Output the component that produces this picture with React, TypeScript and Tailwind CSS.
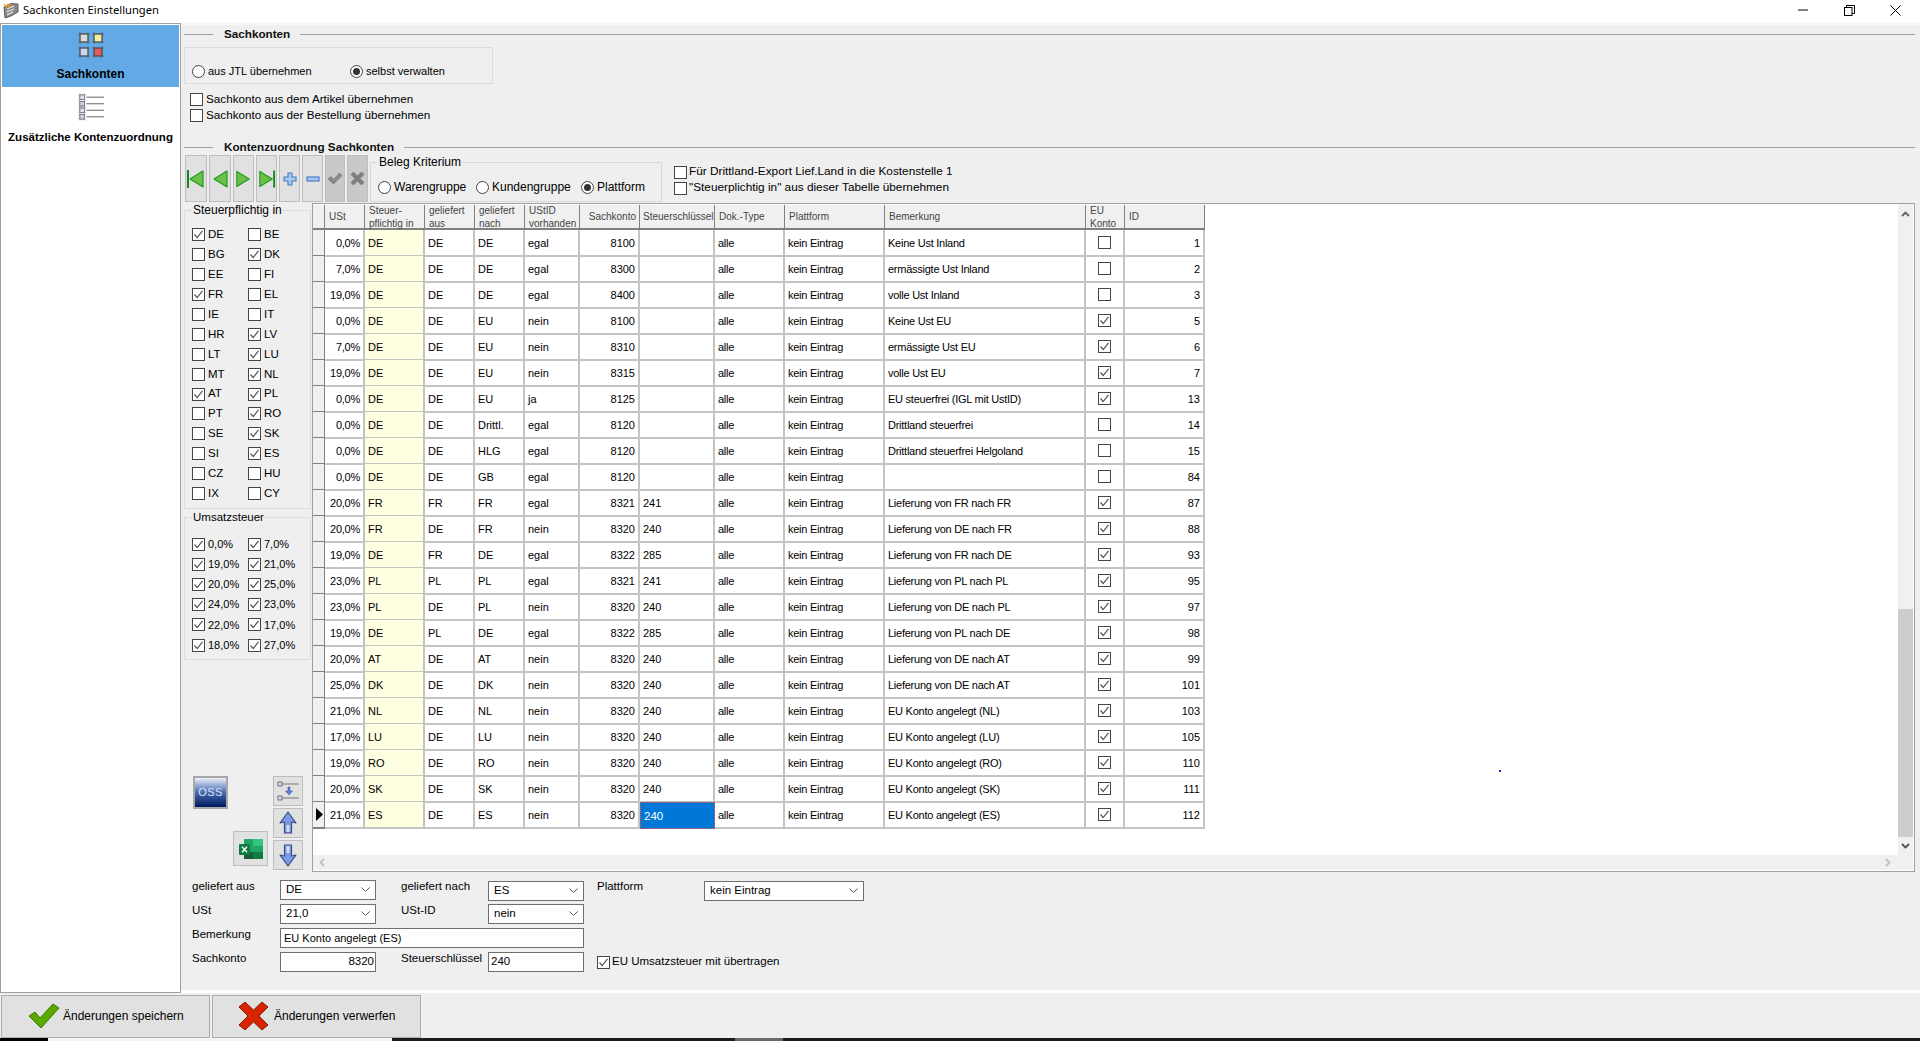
import type { ReactNode } from "react";

const rows: [string, string, string, string, string, string, string, string, boolean, string][] = [
  ["0,0%", "DE", "DE", "DE", "egal", "8100", "", "Keine Ust Inland", false, "1"],
  ["7,0%", "DE", "DE", "DE", "egal", "8300", "", "ermässigte Ust Inland", false, "2"],
  ["19,0%", "DE", "DE", "DE", "egal", "8400", "", "volle Ust Inland", false, "3"],
  ["0,0%", "DE", "DE", "EU", "nein", "8100", "", "Keine Ust EU", true, "5"],
  ["7,0%", "DE", "DE", "EU", "nein", "8310", "", "ermässigte Ust EU", true, "6"],
  ["19,0%", "DE", "DE", "EU", "nein", "8315", "", "volle Ust EU", true, "7"],
  ["0,0%", "DE", "DE", "EU", "ja", "8125", "", "EU steuerfrei (IGL mit UstID)", true, "13"],
  ["0,0%", "DE", "DE", "Drittl.", "egal", "8120", "", "Drittland steuerfrei", false, "14"],
  ["0,0%", "DE", "DE", "HLG", "egal", "8120", "", "Drittland steuerfrei Helgoland", false, "15"],
  ["0,0%", "DE", "DE", "GB", "egal", "8120", "", "", false, "84"],
  ["20,0%", "FR", "FR", "FR", "egal", "8321", "241", "Lieferung von FR nach FR", true, "87"],
  ["20,0%", "FR", "DE", "FR", "nein", "8320", "240", "Lieferung von DE nach FR", true, "88"],
  ["19,0%", "DE", "FR", "DE", "egal", "8322", "285", "Lieferung von FR nach DE", true, "93"],
  ["23,0%", "PL", "PL", "PL", "egal", "8321", "241", "Lieferung von PL nach PL", true, "95"],
  ["23,0%", "PL", "DE", "PL", "nein", "8320", "240", "Lieferung von DE nach PL", true, "97"],
  ["19,0%", "DE", "PL", "DE", "egal", "8322", "285", "Lieferung von PL nach DE", true, "98"],
  ["20,0%", "AT", "DE", "AT", "nein", "8320", "240", "Lieferung von DE nach AT", true, "99"],
  ["25,0%", "DK", "DE", "DK", "nein", "8320", "240", "Lieferung von DE nach AT", true, "101"],
  ["21,0%", "NL", "DE", "NL", "nein", "8320", "240", "EU Konto angelegt (NL)", true, "103"],
  ["17,0%", "LU", "DE", "LU", "nein", "8320", "240", "EU Konto angelegt (LU)", true, "105"],
  ["19,0%", "RO", "DE", "RO", "nein", "8320", "240", "EU Konto angelegt (RO)", true, "110"],
  ["20,0%", "SK", "DE", "SK", "nein", "8320", "240", "EU Konto angelegt (SK)", true, "111"],
  ["21,0%", "ES", "DE", "ES", "nein", "8320", "240", "EU Konto angelegt (ES)", true, "112"],
];

const countries: [string, boolean, string, boolean][] = [
  ["DE", true, "BE", false],
  ["BG", false, "DK", true],
  ["EE", false, "FI", false],
  ["FR", true, "EL", false],
  ["IE", false, "IT", false],
  ["HR", false, "LV", true],
  ["LT", false, "LU", true],
  ["MT", false, "NL", true],
  ["AT", true, "PL", true],
  ["PT", false, "RO", true],
  ["SE", false, "SK", true],
  ["SI", false, "ES", true],
  ["CZ", false, "HU", false],
  ["IX", false, "CY", false],
];

const rates = ["0,0%", "7,0%", "19,0%", "21,0%", "20,0%", "25,0%", "24,0%", "23,0%", "22,0%", "17,0%", "18,0%", "27,0%"];

function Check({ on }: { on?: boolean }) {
  return (
    <span className="flex h-[13px] w-[13px] shrink-0 items-center justify-center border border-[#444] bg-white">
      {on && (
        <svg width="11" height="11" viewBox="0 0 11 11" fill="none" stroke="#555" strokeWidth="1.2">
          <path d="M1.5 5.5 L4.2 8.5 L9.5 1.8" />
        </svg>
      )}
    </span>
  );
}

function Radio({ on }: { on?: boolean }) {
  return (
    <span className="flex h-[13px] w-[13px] shrink-0 items-center justify-center rounded-full border border-[#444] bg-white">
      {on && <span className="h-[7px] w-[7px] rounded-full bg-[#333]" />}
    </span>
  );
}

function SectionHead({ title, className }: { title: string; className: string }) {
  return (
    <div className={`flex items-center ${className}`}>
      <div className="h-[1px] w-[29px] bg-[#a0a0a0]" />
      <span className="ml-[11px] mr-[10px] text-[11.7px] font-bold leading-[14px] text-[#111]">{title}</span>
      <div className="h-[1px] flex-1 bg-[#a0a0a0]" />
    </div>
  );
}

function ToolBtn({ w, dim, children }: { w: string; dim?: boolean; children: ReactNode }) {
  return (
    <button
      className={`flex h-[47px] items-center justify-center border border-[#bdbdbd] ${w} ${dim ? "bg-[#c9c9c9]" : "bg-[#e1e1e1]"}`}
    >
      {children}
    </button>
  );
}

function Select({ value, className }: { value: string; className: string }) {
  return (
    <div className={`flex h-[20px] items-center justify-between border border-[#6f6f6f] bg-white pl-[5px] pr-[5px] text-[11.5px] ${className}`}>
      <span>{value}</span>
      <svg width="9" height="6" viewBox="0 0 9 6" fill="none" stroke="#555" strokeWidth="1">
        <path d="M0.5 0.5 L4.5 4.5 L8.5 0.5" />
      </svg>
    </div>
  );
}

function FormLabel({ children, className = "" }: { children: ReactNode; className?: string }) {
  return <div className={`text-[11.5px] leading-[13px] ${className}`}>{children}</div>;
}

function SquaresIcon() {
  const cell = (x: number, y: number, fill: string) => (
    <g key={`${x}-${y}`}>
      <rect x={x + 2} y={y + 2} width="8" height="8" fill={fill} stroke="#444" strokeWidth="1" />
      <path d={`M${x} ${y + 2}H${x + 12}M${x} ${y + 10}H${x + 12}M${x + 2} ${y}V${y + 12}M${x + 10} ${y}V${y + 12}`} stroke="#555" strokeWidth="0.6" />
    </g>
  );
  return (
    <svg width="28" height="28" viewBox="0 0 28 28">
      {cell(1, 1, "#dcdcdc")}
      {cell(15, 1, "#f4eda0")}
      {cell(1, 15, "#ccd4f0")}
      {cell(15, 15, "#e65a5a")}
    </svg>
  );
}

function ListIcon() {
  return (
    <svg width="28" height="28" viewBox="0 0 30 30">
      {[2, 9, 16, 23].map((y, i) => (
        <g key={y}>
          <rect x="3" y={y} width="5" height="5" fill={i % 2 ? "#c8d0ec" : "#dfe3f3"} stroke="#555" strokeWidth="0.8" />
          <path d={`M1 ${y}H10M1 ${y + 5}H10M3 ${y - 2}V${y + 7}M8 ${y - 2}V${y + 7}`} stroke="#888" strokeWidth="0.4" />
          <path d={`M10 ${y + 2.5}H29`} stroke="#777" strokeWidth="1.2" />
        </g>
      ))}
    </svg>
  );
}

function AppIcon() {
  return (
    <svg width="16" height="17" viewBox="0 0 16 17">
      <path d="M1 5 L8 1.5 L15 2 L15 10 L8 14 L2 16 Z" fill="#8a8a8a" stroke="#444" strokeWidth="0.8" />
      <path d="M4 7 L11 4 M3.5 10 L11 7 M4 13 L10 10" stroke="#e8e8e8" strokeWidth="1.2" />
      <path d="M1 2 L3 5 L4.5 2.5 L6 5 L7.5 2" fill="none" stroke="#e89a22" strokeWidth="1.2" />
    </svg>
  );
}

function Triangle({ dir, bar }: { dir: "l" | "r"; bar?: boolean }) {
  const d = dir === "l" ? "M17 3 L17 19 L4 11 Z" : "M3 3 L3 19 L16 11 Z";
  return (
    <svg width="20" height="22" viewBox="0 0 20 22">
      <path d={d} fill="#6cc04a" stroke="#1f9a1f" strokeWidth="1.2" strokeLinejoin="round" />
      {bar && <path d={dir === "l" ? "M2 2V20" : "M18 2V20"} stroke="#0f8a1f" strokeWidth="2" />}
    </svg>
  );
}

function ArrowIcon({ down }: { down?: boolean }) {
  return (
    <svg width="20" height="24" viewBox="0 0 20 24" className={down ? "rotate-180" : ""}>
      <path d="M10 1 L18 12 L13.5 11 L13.5 22 L6.5 22 L6.5 11 L2 12 Z" fill="#7c9be6" stroke="#3a4f86" strokeWidth="1.2" strokeLinejoin="round" />
      <path d="M8.5 14 H11.5 V21 H8.5 Z" fill="#d4def8" />
    </svg>
  );
}

function ExcelIcon() {
  return (
    <svg width="24" height="20" viewBox="0 0 24 20">
      <rect x="5" y="0" width="19" height="20" rx="1" fill="#21a366" />
      <rect x="14" y="0" width="10" height="7" fill="#33c481" />
      <rect x="5" y="13" width="9" height="7" fill="#185c37" />
      <rect x="14" y="13" width="10" height="7" fill="#107c41" />
      <rect x="0" y="5" width="11" height="11" rx="1" fill="#107c41" />
      <path d="M3 7.8 L8 13.2 M8 7.8 L3 13.2" stroke="#fff" strokeWidth="1.4" />
    </svg>
  );
}

function SortIcon() {
  return (
    <svg width="24" height="24" viewBox="0 0 24 24">
      <rect x="2" y="3" width="4" height="4" fill="#dde" stroke="#555" strokeWidth="0.8" />
      <path d="M6 5H23" stroke="#777" strokeWidth="1" />
      <rect x="2" y="17" width="4" height="4" fill="#dde" stroke="#555" strokeWidth="0.8" />
      <path d="M6 19H23" stroke="#777" strokeWidth="1" />
      <path d="M12 8H14V12H16.5L13 16L9.5 12H12Z" fill="#5f82dd" stroke="#3a4f86" strokeWidth="0.5" />
    </svg>
  );
}

function Grid() {
  const head = "flex h-[25px] items-center border-r border-b-2 border-r-[#808080] border-b-[#808080] bg-[#f0f0f0] pl-[4px] text-[10px] leading-[13px] text-[#444]";
  const cell = "-mt-[1px] flex h-[27px] items-center border-r-2 border-b-2 border-[#c4c4c4] px-[3px] pt-[2px] text-[11px]";
  const wide = "text-[11.5px]";
  const narrow = "tracking-[-0.25px]";
  return (
    <div className="grid w-[892px] grid-cols-[12px_40px_60px_50px_50px_55px_60px_75px_70px_100px_201px_39px_80px] auto-rows-[26px]">
      <div className="h-[25px] border-r border-b-2 border-[#808080] bg-[#f0f0f0]" />
      <div className={head}>USt</div>
      <div className={head}>Steuer-<br />pflichtig in</div>
      <div className={head}>geliefert<br />aus</div>
      <div className={head}>geliefert<br />nach</div>
      <div className={head}>UStID<br />vorhanden</div>
      <div className={`${head} justify-end pr-[3px]`}>Sachkonto</div>
      <div className={`${head} !pl-[3px]`}>Steuerschlüssel</div>
      <div className={head}>Dok.-Type</div>
      <div className={head}>Plattform</div>
      <div className={head}>Bemerkung</div>
      <div className={head}>EU<br />Konto</div>
      <div className={head}>ID</div>
      {rows.map((r, i) => {
        const last = i === rows.length - 1;
        return (
          <div key={r[9]} className="contents">
            <div className="-mt-[1px] flex h-[27px] items-center border-r border-b-2 border-[#808080] bg-[#f0f0f0]">
              {last && (
                <svg width="9" height="13" viewBox="0 0 9 13" className="ml-[2px]">
                  <path d="M1 0 L8 6.5 L1 13 Z" fill="#000" />
                </svg>
              )}
            </div>
            <div className={`${cell} justify-end ${narrow}`}>{r[0]}</div>
            <div className={`${cell} ${wide} bg-[#ffffe1]`}>{r[1]}</div>
            <div className={`${cell} ${wide}`}>{r[2]}</div>
            <div className={`${cell} ${wide}`}>{r[3]}</div>
            <div className={cell}>{r[4]}</div>
            <div className={`${cell} justify-end`}>{r[5]}</div>
            {last ? (
              <div className="-mt-[1px] flex h-[27px] items-center border border-dotted border-[#ff5030] bg-[#0078d7] px-[3px] pt-[2px] text-[11.5px] text-white">{r[6]}</div>
            ) : (
              <div className={`${cell} ${wide}`}>{r[6]}</div>
            )}
            <div className={`${cell} ${narrow}`}>alle</div>
            <div className={`${cell} ${narrow}`}>kein Eintrag</div>
            <div className={`${cell} ${narrow}`}>{r[7]}</div>
            <div className={`${cell} justify-center !pt-0`}>
              <Check on={r[8]} />
            </div>
            <div className={`${cell} justify-end`}>{r[9]}</div>
          </div>
        );
      })}
    </div>
  );
}

export default function App() {
  return (
    <div className="flex h-[1041px] w-[1920px] flex-col overflow-hidden bg-white text-black [font-family:Liberation_Sans,sans-serif]">
      {/* title bar */}
      <div className="flex h-[23px] items-center pb-[3px] pl-[3px]">
        <AppIcon />
        <span className="ml-[4px] text-[11.2px] [font-family:Noto_Sans,sans-serif]">Sachkonten Einstellungen</span>
        <div className="flex-1" />
        <svg width="10" height="10" viewBox="0 0 10 10" className="mr-[36px]">
          <path d="M0 5H10" stroke="#000" strokeWidth="1" />
        </svg>
        <svg width="11" height="11" viewBox="0 0 11 11" className="mr-[35px]" fill="none" stroke="#000" strokeWidth="1">
          <rect x="0.5" y="2.5" width="7.5" height="8" />
          <path d="M2.5 2.5V0.5H10.5V8.5H8" />
        </svg>
        <svg width="11" height="11" viewBox="0 0 11 11" className="mr-[19px]" stroke="#000" strokeWidth="1">
          <path d="M0.5 0.5L10.5 10.5M10.5 0.5L0.5 10.5" />
        </svg>
      </div>

      <div className="flex h-[970px]">
        {/* sidebar */}
        <div className="w-[181px] shrink-0 border border-[#a0a0a0] bg-white p-[1px]">
          <div className="flex h-[62px] flex-col items-center bg-[#63a9e6] pt-[6px]">
            <SquaresIcon />
            <span className="mt-[8px] text-[12px] font-bold leading-[14px]">Sachkonten</span>
          </div>
          <div className="mt-[6px] flex flex-col items-center">
            <ListIcon />
            <span className="mt-[9px] whitespace-nowrap text-[11.5px] font-bold leading-[14px]">Zusätzliche Kontenzuordnung</span>
          </div>
        </div>

        {/* main */}
        <div className="flex h-[967px] flex-1 flex-col border-t-2 border-[#f7f7f7] bg-[#efefef] pl-[3px] pr-[5px] text-[12px]">
          <SectionHead title="Sachkonten" className="h-[18px]" />
          <div className="mt-[4px] flex h-[37px] w-[309px] items-end border border-[#dcdcdc] pb-[5px] pl-[7px] text-[11px] leading-[14px]">
            <div className="flex w-[158px] items-center gap-[3px]">
              <Radio />
              <span>aus JTL übernehmen</span>
            </div>
            <div className="flex items-center gap-[3px]">
              <Radio on />
              <span>selbst verwalten</span>
            </div>
          </div>
          <div className="mt-[7px] flex flex-col pl-[6px] text-[11.7px]">
            <div className="flex h-[16px] items-center gap-[3px]">
              <Check />
              <span>Sachkonto aus dem Artikel übernehmen</span>
            </div>
            <div className="flex h-[16px] items-center gap-[3px]">
              <Check />
              <span>Sachkonto aus der Bestellung übernehmen</span>
            </div>
          </div>
          <SectionHead title="Kontenzuordnung Sachkonten" className="mt-[16px] h-[16px]" />

          {/* toolbar */}
          <div className="flex h-[47px] pl-[1px]">
            <div className="flex gap-[2px]">
              <ToolBtn w="w-[22px]"><Triangle dir="l" bar /></ToolBtn>
              <ToolBtn w="w-[22px]"><Triangle dir="l" /></ToolBtn>
              <ToolBtn w="w-[21px]"><Triangle dir="r" /></ToolBtn>
              <ToolBtn w="w-[21px]"><Triangle dir="r" bar /></ToolBtn>
              <ToolBtn w="w-[21px]">
                <svg width="14" height="14" viewBox="0 0 14 14">
                  <path d="M5 1H9V5H13V9H9V13H5V9H1V5H5Z" fill="#a8c8f0" stroke="#4a7cc8" strokeWidth="1.2" />
                </svg>
              </ToolBtn>
              <ToolBtn w="w-[21px]">
                <svg width="14" height="6" viewBox="0 0 14 6">
                  <rect x="1" y="1" width="12" height="4" fill="#a8c8f0" stroke="#4a7cc8" strokeWidth="1.2" />
                </svg>
              </ToolBtn>
              <ToolBtn w="w-[20px]" dim>
                <svg width="16" height="13" viewBox="0 0 16 13">
                  <path d="M1 7 L4 4.5 L6.5 7.5 L12.5 1 L15 3.5 L6.5 12 Z" fill="#8b8b8b" stroke="#6a6a6a" strokeWidth="0.6" />
                </svg>
              </ToolBtn>
              <ToolBtn w="w-[21px]" dim>
                <svg width="15" height="15" viewBox="0 0 15 15">
                  <path d="M1 3.5 L3.5 1 L7.5 5 L11.5 1 L14 3.5 L10 7.5 L14 11.5 L11.5 14 L7.5 10 L3.5 14 L1 11.5 L5 7.5 Z" fill="#7f7f7f" stroke="#6a6a6a" strokeWidth="0.6" />
                </svg>
              </ToolBtn>
            </div>
            <fieldset className="ml-[2px] h-[47px] w-[292px] border border-[#d8d8d8] pl-[7px]">
              <legend className="-ml-[1px] px-[2px] text-[12px] leading-[14px]">Beleg Kriterium</legend>
              <div className="mt-[11px] flex items-center leading-[14px]">
                <div className="flex w-[98px] items-center gap-[3px]"><Radio /><span>Warengruppe</span></div>
                <div className="flex w-[105px] items-center gap-[3px]"><Radio /><span>Kundengruppe</span></div>
                <div className="flex items-center gap-[3px]"><Radio on /><span>Plattform</span></div>
              </div>
            </fieldset>
            <div className="ml-[12px] mt-[9px] flex flex-col text-[11.8px]">
              <div className="flex h-[16px] items-center gap-[2px]"><Check /><span>Für Drittland-Export Lief.Land in die Kostenstelle 1</span></div>
              <div className="flex h-[16px] items-center gap-[2px]"><Check /><span>"Steuerplichtig in" aus dieser Tabelle übernehmen</span></div>
            </div>
          </div>

          {/* left filters + grid */}
          <div className="mt-[1px] flex h-[669px]">
            <div className="w-[128px] shrink-0">
              <fieldset className="h-[306px] w-[127px] border border-[#dcdcdc] pl-[7px]">
                <legend className="px-[1px] text-[12px] leading-[14px]">Steuerpflichtig in</legend>
                <div className="grid grid-cols-[56px_56px] auto-rows-[19.9px] pt-[8px] text-[11.5px]">
                  {countries.map(([a, aOn, b, bOn]) => (
                    <div key={a} className="contents">
                      <div className="flex items-center gap-[3px]"><Check on={aOn} /><span>{a}</span></div>
                      <div className="flex items-center gap-[3px]"><Check on={bOn} /><span>{b}</span></div>
                    </div>
                  ))}
                </div>
              </fieldset>
              <fieldset className="mt-[1px] h-[150px] w-[127px] border border-[#dcdcdc] pl-[7px]">
                <legend className="px-[1px] text-[11.5px] leading-[14px]">Umsatzsteuer</legend>
                <div className="grid grid-cols-[56px_56px] auto-rows-[20.2px] pt-[10px] text-[11px]">
                  {rates.map((r) => (
                    <div key={r} className="flex items-center gap-[3px]"><Check on /><span>{r}</span></div>
                  ))}
                </div>
              </fieldset>
              <div className="ml-[9px] mt-[116px] grid grid-cols-[35px_35px_30px] grid-rows-[30px_30px_30px] gap-x-[5px] gap-y-[2px]">
                <button className="col-start-1 row-start-1 row-span-2 flex h-[33px] items-center justify-center self-start border-2 border-[#a8a8a8] bg-gradient-to-b from-[#eef2fa] via-[#4a68ae] to-[#001a5e] text-[11px] tracking-[0.5px] text-[#d8e4f8]">OSS</button>
                <button className="col-start-3 row-start-1 flex items-center justify-center border border-[#bdbdbd] bg-[#e1e1e1]"><SortIcon /></button>
                <button className="col-start-3 row-start-2 flex items-center justify-center border border-[#bdbdbd] bg-[#e1e1e1]"><ArrowIcon /></button>
                <button className="col-start-2 row-start-2 row-span-2 mb-[4px] flex h-[35px] items-center justify-center self-end border border-[#bdbdbd] bg-[#e1e1e1]"><ExcelIcon /></button>
                <button className="col-start-3 row-start-3 flex items-center justify-center border border-[#bdbdbd] bg-[#e1e1e1]"><ArrowIcon down /></button>
              </div>
            </div>

            <div className="relative flex flex-1 flex-col border border-[#a0a0a0] bg-white">
              <div className="flex min-h-0 flex-1">
                <div className="flex-1 pt-[1px]"><Grid /></div>
                <div className="mr-[1px] flex w-[15px] flex-col bg-[#f0f0f0]">
                  <div className="flex h-[18px] items-center justify-center pt-[2px]">
                    <svg width="9" height="6" viewBox="0 0 9 6" fill="none" stroke="#606060" strokeWidth="1.8"><path d="M1 5 L4.5 1.5 L8 5" /></svg>
                  </div>
                  <div className="flex-1" />
                  <div className="h-[228px] bg-[#cdcdcd]" />
                  <div className="flex h-[18px] items-center justify-center">
                    <svg width="9" height="6" viewBox="0 0 9 6" fill="none" stroke="#505050" strokeWidth="1.8"><path d="M1 1 L4.5 4.5 L8 1" /></svg>
                  </div>
                </div>
              </div>
              <div className="mb-[1px] mr-[1px] flex h-[15px] items-center justify-between bg-[#f0f0f0] pl-[6px] pr-[22px]">
                <svg width="6" height="9" viewBox="0 0 6 9" fill="none" stroke="#c0c0c0" strokeWidth="1.8"><path d="M5 1 L1.5 4.5 L5 8" /></svg>
                <svg width="6" height="9" viewBox="0 0 6 9" fill="none" stroke="#c0c0c0" strokeWidth="1.8"><path d="M1 1 L4.5 4.5 L1 8" /></svg>
              </div>
              {/* stray pixel in the grid area */}
              <span className="absolute left-[1186px] top-[566px] h-[2px] w-[2px] bg-[#2020e0]" />
            </div>
          </div>

          {/* edit form */}
          <div className="mt-[8px] grid grid-cols-[96px_96px_112px_96px_13px_107px_160px] grid-rows-[20px_20px_20px_20px] gap-y-[4px]">
            <FormLabel className="pl-[8px]">geliefert aus</FormLabel>
            <Select value="DE" className="" />
            <FormLabel className="pl-[25px]">geliefert nach</FormLabel>
            <Select value="ES" className="mt-[1px]" />
            <div />
            <FormLabel>Plattform</FormLabel>
            <Select value="kein Eintrag" className="mt-[1px]" />

            <FormLabel className="pl-[8px]">USt</FormLabel>
            <Select value="21,0" className="" />
            <FormLabel className="pl-[25px]">USt-ID</FormLabel>
            <Select value="nein" className="" />
            <div className="col-span-3" />

            <FormLabel className="pl-[8px]">Bemerkung</FormLabel>
            <div className="col-span-3 flex h-[20px] items-center border border-[#6f6f6f] bg-white pl-[3px] text-[11px]">EU Konto angelegt (ES)</div>
            <div className="col-span-3" />

            <FormLabel className="pl-[8px]">Sachkonto</FormLabel>
            <div className="flex h-[20px] items-center justify-end border border-[#6f6f6f] bg-white pr-[1px] text-[11.5px]">8320</div>
            <FormLabel className="pl-[25px]">Steuerschlüssel</FormLabel>
            <div className="flex h-[20px] items-center border border-[#6f6f6f] bg-white pl-[2px] text-[11.5px]">240</div>
            <div />
            <div className="col-span-2 flex h-[20px] items-center gap-[2px] text-[11.5px]"><Check on /><span>EU Umsatzsteuer mit übertragen</span></div>
          </div>
        </div>
      </div>

      {/* footer buttons */}
      <div className="flex h-[45px] gap-[1px] bg-[#efefef] pl-[1px] pt-[2px]">
        <button className="flex h-[43px] w-[209px] items-center border border-[#adadad] bg-[#e1e1e1] pb-[2px] pl-[26px] text-[12px]">
          <svg width="32" height="26" viewBox="0 0 32 26" className="mr-[3px] shrink-0">
            <path d="M1 13 L7 9 L12 15 L25 1 L31 5 L13 25 Z" fill="#5aa800" stroke="#3a7a00" strokeWidth="1" strokeLinejoin="round" />
          </svg>
          Änderungen speichern
        </button>
        <button className="ml-[1px] flex h-[43px] w-[209px] items-center border border-[#adadad] bg-[#e1e1e1] pb-[2px] pl-[25px] text-[12px]">
          <svg width="31" height="30" viewBox="0 0 31 30" className="mr-[5px] shrink-0">
            <path d="M1 6 L7 1 L15.5 9 L24 1 L30 6 L21 15 L30 24 L24 29 L15.5 21 L7 29 L1 24 L10 15 Z" fill="#d92400" stroke="#8e1a00" strokeWidth="1" strokeLinejoin="round" />
          </svg>
          Änderungen verwerfen
        </button>
      </div>

      {/* taskbar sliver */}
      <div className="flex h-[3px] bg-[#1c1c1c]">
        <div className="w-[48px] bg-black" />
        <div className="w-[344px] bg-[#f4f4f4]" />
        <div className="w-[343px]" />
        <div className="w-[48px] bg-[#6a6a6a]" />
      </div>
    </div>
  );
}
